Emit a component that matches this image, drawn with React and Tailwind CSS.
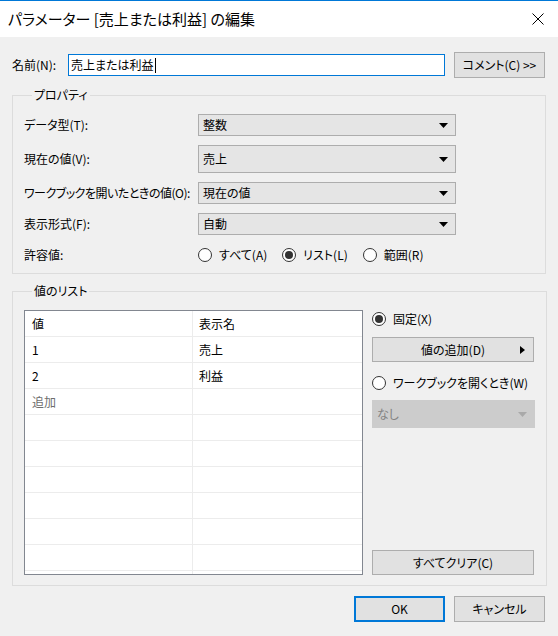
const font = "[font-family:'Noto_Sans_CJK_JP','Noto_Sans',sans-serif] [font-feature-settings:'palt']"

function Arrow({ disabled }) {
    return (
        <svg width="9" height="5" viewBox="0 0 9 5" className="shrink-0">
            <path d="M0 0h9L4.5 5z" fill={disabled ? '#a9a9a9' : '#000'} />
        </svg>
    )
}

function Select({ value, tall, disabled }) {
    return (
        <div
            className={`flex items-center justify-between border pl-[4px] pr-[7px] ${tall ? 'h-[28px]' : 'h-[22px]'} ${
                disabled ? 'bg-[#cccccc] border-[#cccccc] text-[#838383]' : 'bg-[#e5e5e5] border-[#adadad] text-black'
            }`}
        >
            <span>{value}</span>
            <Arrow disabled={disabled} />
        </div>
    )
}

function Radio({ checked, label }) {
    return (
        <label className="flex items-center gap-[7px] whitespace-nowrap">
            <span className="flex h-[14px] w-[14px] items-center justify-center rounded-full border border-[#333] bg-white">
                {checked && <span className="h-[8px] w-[8px] rounded-full bg-[#333]" />}
            </span>
            <span>{label}</span>
        </label>
    )
}

function Button({ children, className = '', primary }) {
    return (
        <button
            className={`flex items-center justify-center bg-[#e1e1e1] ${
                primary ? 'border-2 border-[#0078d7]' : 'border border-[#adadad]'
            } ${className}`}
        >
            {children}
        </button>
    )
}

function Group({ title, children, className = '' }) {
    return (
        <fieldset className={`border border-[#dcdcdc] ${className}`}>
            <legend className="ml-[8px] px-[2px] leading-[16px]">{title}</legend>
            {children}
        </fieldset>
    )
}

const rows = [
    { value: '1', name: '売上' },
    { value: '2', name: '利益' },
    { value: '追加', name: '', placeholder: true },
    ...Array.from({ length: 7 }, () => ({ value: '', name: '' })),
]

export default function App() {
    return (
        <div className={`${font} flex h-[636px] w-[558px] flex-col border-t border-[#0078d7] bg-[#f0f0f0] text-[12px] text-black`}>
            {/* title bar */}
            <div className="flex h-[36px] items-center justify-between bg-white pl-[8px] pr-[14px]">
                <span className="text-[15px]">パラメーター [売上または利益] の編集</span>
                <svg width="12" height="12" viewBox="0 0 12 12">
                    <path d="M0.5 0.5l11 11M11.5 0.5l-11 11" stroke="#000" strokeWidth="1" />
                </svg>
            </div>

            <div className="flex flex-1 flex-col px-[12px] pt-[15px]">
                {/* name */}
                <div className="flex h-[26px] items-center">
                    <span className="w-[56px]">名前(N):</span>
                    <div className="flex h-[22px] w-[377px] items-center border border-[#0078d7] bg-white pl-[2px]">
                        <span>売上または利益</span>
                        <span className="ml-[1px] h-[15px] w-[1px] bg-black" />
                    </div>
                    <Button className="ml-[9px] h-[26px] w-[91px]">コメント(C) &gt;&gt;</Button>
                </div>

                {/* properties */}
                <Group title="プロパティ" className="mt-[9px] pb-[7px] pl-[11px]">
                    <div className="mt-[11px] grid grid-cols-[174px_258px] items-center gap-y-[9px] whitespace-nowrap">
                        <span>データ型(T):</span>
                        <Select value="整数" />
                        <span>現在の値(V):</span>
                        <Select value="売上" tall />
                        <span className="tracking-[-0.5px]">ワークブックを開いたときの値(O):</span>
                        <Select value="現在の値" />
                        <span>表示形式(F):</span>
                        <Select value="自動" />
                        <span>許容値:</span>
                        <div className="flex h-[22px] items-center gap-[15px]">
                            <Radio label="すべて(A)" />
                            <Radio checked label="リスト(L)" />
                            <Radio label="範囲(R)" />
                        </div>
                    </div>
                </Group>

                {/* list of values */}
                <Group title="値のリスト" className="mt-[9px] pb-[10px] pl-[11px] pr-[11px]">
                    <div className="mt-[11px] flex gap-[9px]">
                        <div className="h-[265px] w-[339px] overflow-hidden border border-[#828790] bg-white">
                            {[{ value: '値', name: '表示名' }, ...rows].map((r, i) => (
                                <div key={i} className="grid h-[26px] grid-cols-[168px_1fr] border-b border-[#ececec]">
                                    <span className={`flex items-center border-r border-[#ececec] pl-[7px] ${r.placeholder ? 'text-[#6d6d6d]' : ''}`}>
                                        {r.value}
                                    </span>
                                    <span className="flex items-center pl-[6px]">{r.name}</span>
                                </div>
                            ))}
                        </div>

                        <div className="flex w-[163px] flex-col">
                            <Radio checked label="固定(X)" />
                            <Button className="relative mt-[9px] h-[25px] w-[162px]">
                                値の追加(D)
                                <svg width="5" height="8" viewBox="0 0 5 8" className="absolute right-[8px]">
                                    <path d="M0 0l5 4-5 4z" fill="#000" />
                                </svg>
                            </Button>
                            <div className="mt-[12px]">
                                <Radio label="ワークブックを開くとき(W)" />
                            </div>
                            <div className="mt-[8px]">
                                <Select value="なし" tall disabled />
                            </div>
                            <Button className="mt-auto h-[25px] w-[162px]">すべてクリア(C)</Button>
                        </div>
                    </div>
                </Group>

                {/* dialog buttons */}
                <div className="mt-[10px] flex justify-end gap-[9px] pr-[1px]">
                    <Button primary className="h-[26px] w-[91px]">OK</Button>
                    <Button className="h-[26px] w-[91px]">キャンセル</Button>
                </div>
            </div>
        </div>
    )
}
